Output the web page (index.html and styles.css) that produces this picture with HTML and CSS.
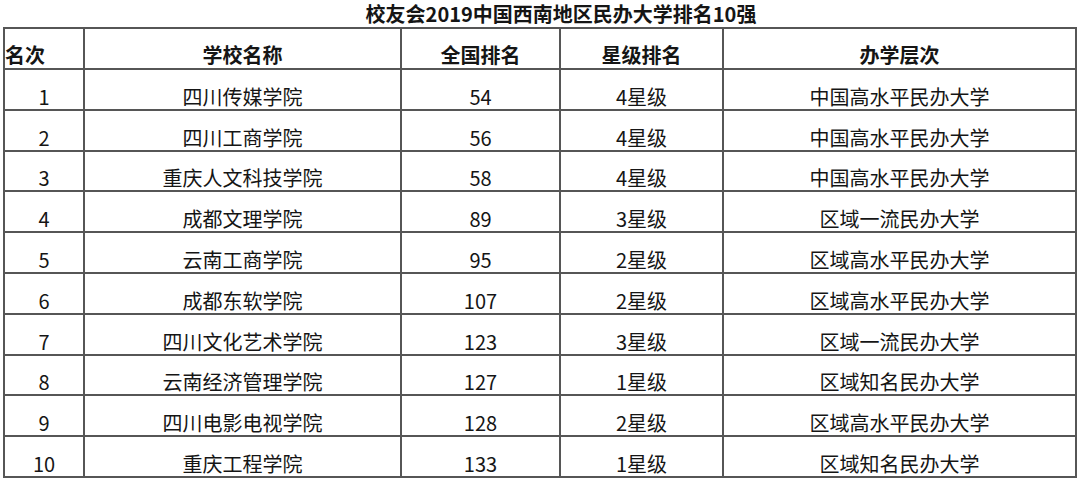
FILE: index.html
```html
<!DOCTYPE html>
<html lang="zh-CN">
<head>
<meta charset="utf-8">
<title>校友会2019中国西南地区民办大学排名10强</title>
<link rel="stylesheet" href="styles.css">
</head>
<body>
<div class="title">校友会2019中国西南地区民办大学排名10强</div>
<table class="rank">
  <thead>
    <tr class="head">
      <th class="c1 left">名次</th>
      <th class="c2">学校名称</th>
      <th class="c3">全国排名</th>
      <th class="c4">星级排名</th>
      <th class="c5">办学层次</th>
    </tr>
  </thead>
  <tbody>
    <tr><td>1</td><td>四川传媒学院</td><td>54</td><td>4星级</td><td>中国高水平民办大学</td></tr>
    <tr><td>2</td><td>四川工商学院</td><td>56</td><td>4星级</td><td>中国高水平民办大学</td></tr>
    <tr><td>3</td><td>重庆人文科技学院</td><td>58</td><td>4星级</td><td>中国高水平民办大学</td></tr>
    <tr><td>4</td><td>成都文理学院</td><td>89</td><td>3星级</td><td>区域一流民办大学</td></tr>
    <tr><td>5</td><td>云南工商学院</td><td>95</td><td>2星级</td><td>区域高水平民办大学</td></tr>
    <tr><td>6</td><td>成都东软学院</td><td>107</td><td>2星级</td><td>区域高水平民办大学</td></tr>
    <tr><td>7</td><td>四川文化艺术学院</td><td>123</td><td>3星级</td><td>区域一流民办大学</td></tr>
    <tr><td>8</td><td>云南经济管理学院</td><td>127</td><td>1星级</td><td>区域知名民办大学</td></tr>
    <tr><td>9</td><td>四川电影电视学院</td><td>128</td><td>2星级</td><td>区域高水平民办大学</td></tr>
    <tr><td>10</td><td>重庆工程学院</td><td>133</td><td>1星级</td><td>区域知名民办大学</td></tr>
  </tbody>
</table>
</body>
</html>
```
FILE: styles.css
```css
html, body {
  margin: 0;
  padding: 0;
  background: #ffffff;
}

body {
  font-family: "Noto Sans CJK SC", "Noto Sans", sans-serif;
  color: #151515;
  width: 1080px;
  height: 481px;
  overflow: hidden;
}

.title {
  box-sizing: border-box;
  height: 27px;
  padding-top: 4px;
  padding-left: 42px;
  font-size: 20px;
  line-height: 20px;
  font-weight: bold;
  text-align: center;
  white-space: nowrap;
}

.rank {
  box-sizing: border-box;
  margin-left: 3px;
  width: 1074px;
  table-layout: fixed;
  border-collapse: separate;
  border-spacing: 0;
  border-top: 2px solid #565656;
  border-left: 2px solid #565656;
}

.rank th,
.rank td {
  box-sizing: border-box;
  padding: 0 0 2px 0;
  border-right: 2px solid #565656;
  border-bottom: 2px solid #565656;
  font-size: 20px;
  line-height: 20px;
  text-align: center;
  vertical-align: bottom;
  white-space: nowrap;
}

.rank th {
  height: 41px;
  font-weight: bold;
  padding-bottom: 3px;
}

.rank td {
  height: 40.8px;
  font-weight: normal;
}

.rank .left {
  text-align: left;
}

.c1 { width: 80px; }
.c2 { width: 317px; }
.c3 { width: 159px; }
.c4 { width: 163px; }
.c5 { width: 353px; }
```
